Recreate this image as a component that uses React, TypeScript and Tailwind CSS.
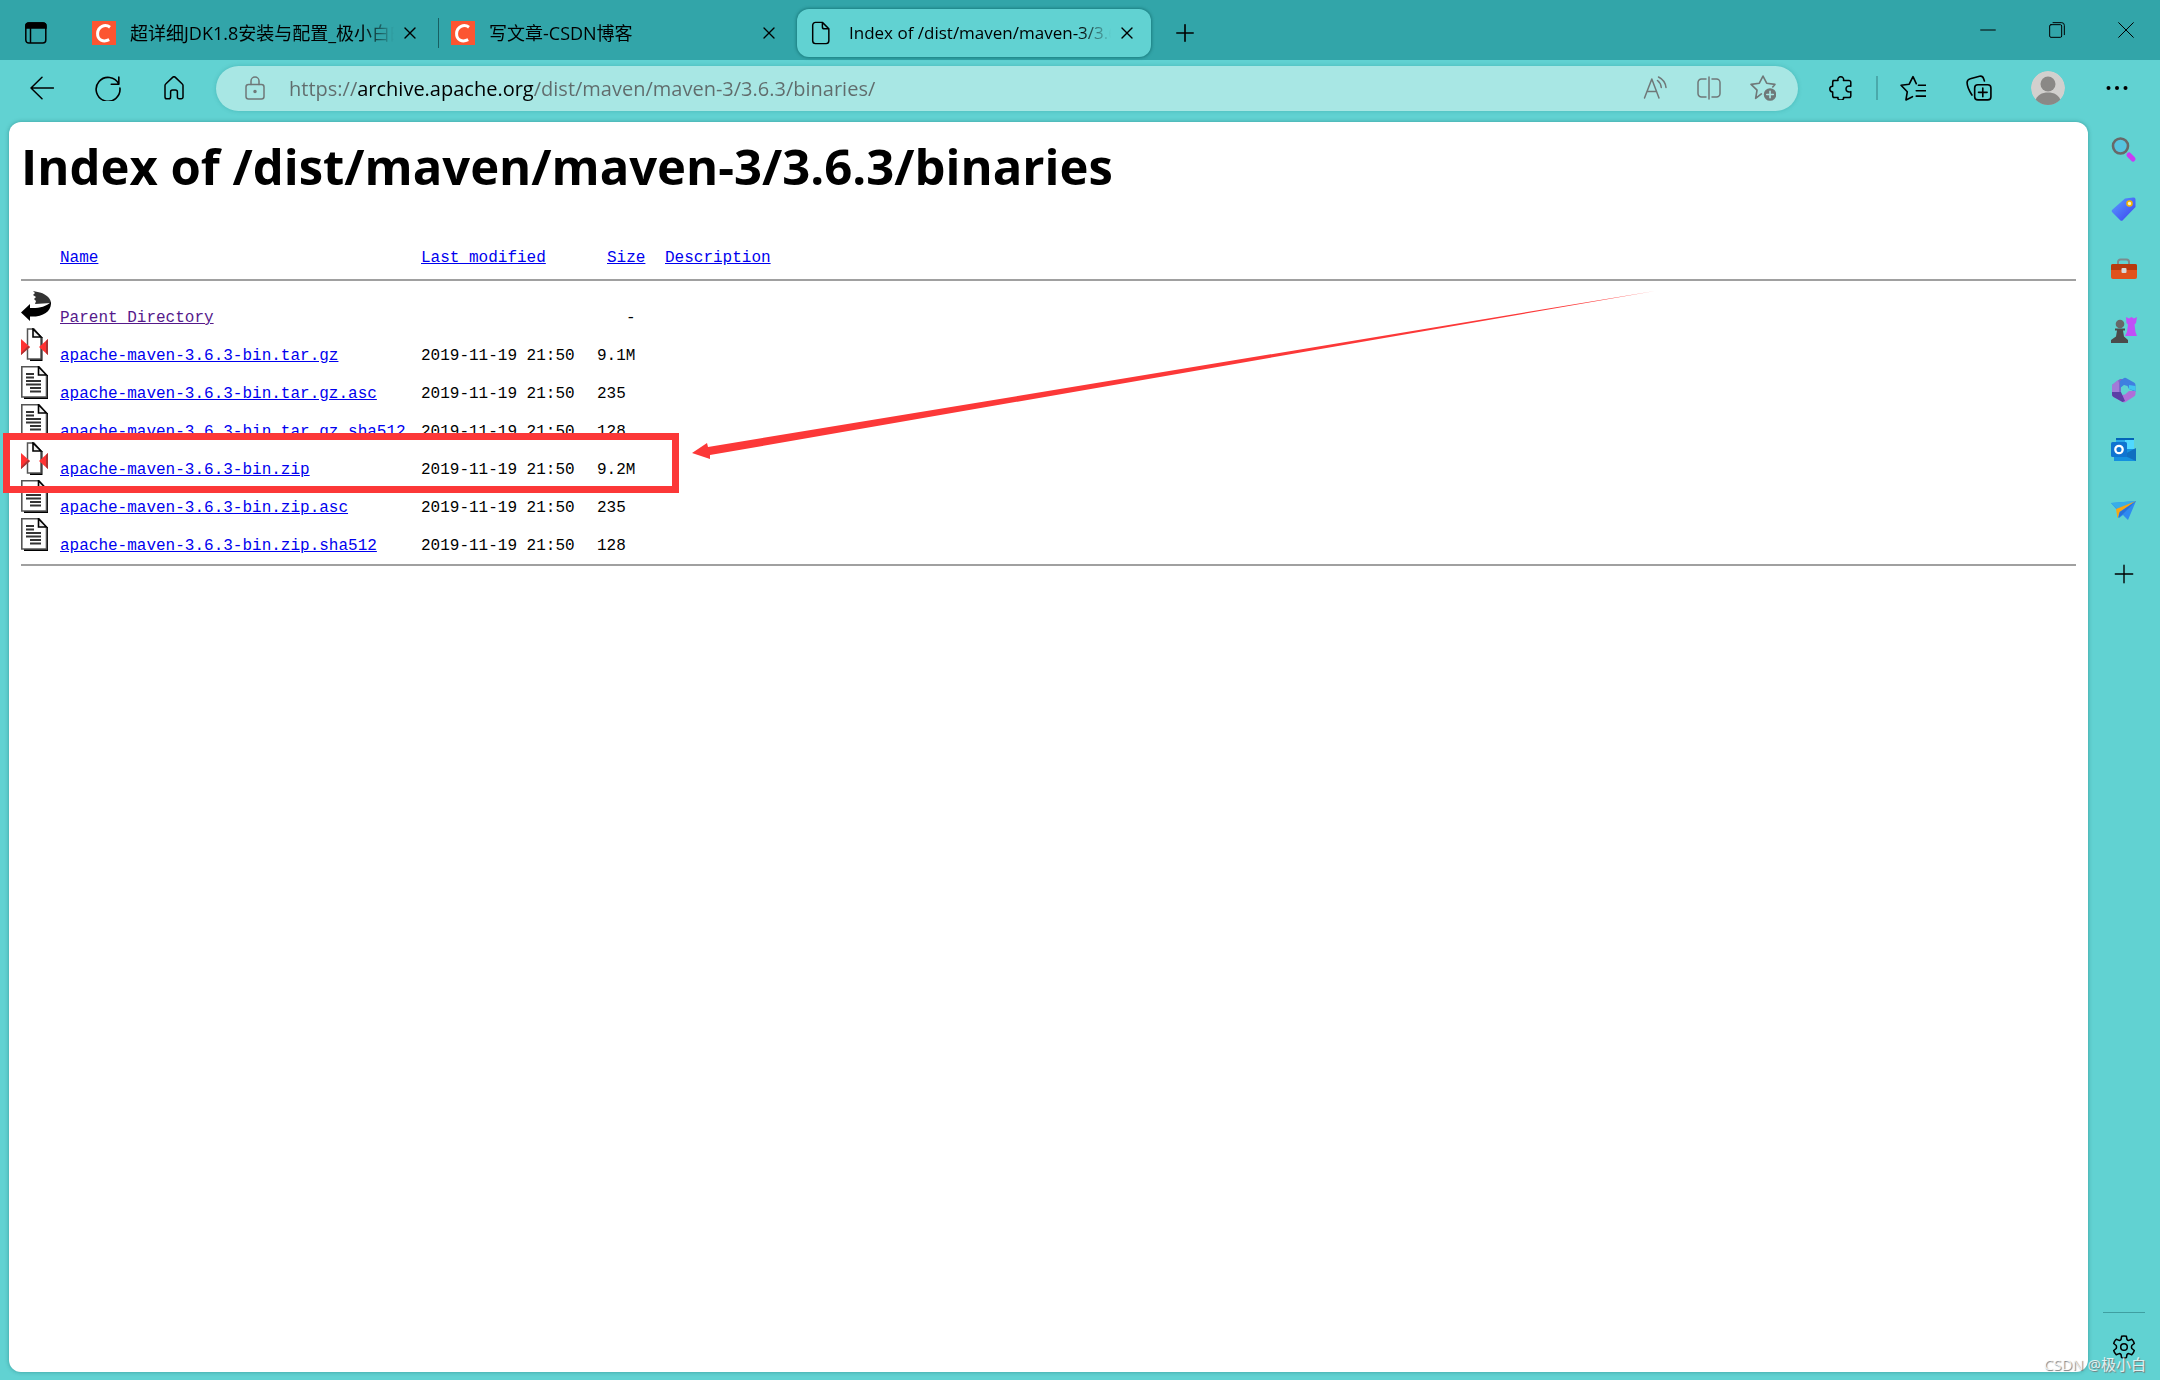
import React from 'react';
import { Plus, X } from 'lucide-react';

const FILES = [
  { name: 'Parent Directory', modified: '', size: '-', icon: 'back' },
  { name: 'apache-maven-3.6.3-bin.tar.gz', modified: '2019-11-19 21:50', size: '9.1M', icon: 'archive' },
  { name: 'apache-maven-3.6.3-bin.tar.gz.asc', modified: '2019-11-19 21:50', size: '235', icon: 'text' },
  { name: 'apache-maven-3.6.3-bin.tar.gz.sha512', modified: '2019-11-19 21:50', size: '128', icon: 'text' },
  { name: 'apache-maven-3.6.3-bin.zip', modified: '2019-11-19 21:50', size: '9.2M', icon: 'archive' },
  { name: 'apache-maven-3.6.3-bin.zip.asc', modified: '2019-11-19 21:50', size: '235', icon: 'text' },
  { name: 'apache-maven-3.6.3-bin.zip.sha512', modified: '2019-11-19 21:50', size: '128', icon: 'text' },
];

const HIGHLIGHTED = 'apache-maven-3.6.3-bin.zip';

type IconProps = { children: React.ReactNode; className?: string };

const Line = ({ children, className = 'size-6' }: IconProps) => (
  <svg viewBox="0 0 24 24" className={className} fill="none" stroke="currentColor" strokeWidth="1.5" strokeLinecap="round" strokeLinejoin="round" aria-hidden="true">
    {children}
  </svg>
);

const IconButton = ({ label, className = 'w-16', children }: IconProps & { label: string }) => (
  <button type="button" aria-label={label} className={`flex h-11 shrink-0 items-center justify-center ${className}`}>
    {children}
  </button>
);

const CsdnIcon = () => (
  <svg viewBox="0 0 24 24" className="size-6 shrink-0" aria-hidden="true">
    <rect width="24" height="24" fill="#fc5531" />
    <path d="M18 6.2C13 2.6 6 5.6 5.6 12.4C5.3 19 11.3 21.6 17.2 18.6" fill="none" stroke="#fff" strokeWidth="3" />
  </svg>
);

const PageIcon = () => (
  <svg viewBox="0 0 20 26" className="h-6 w-5 shrink-0" fill="none" stroke="#000" strokeWidth="1.6" strokeLinejoin="round" aria-hidden="true">
    <path d="M4 1.5h7.5l7 7v13a3 3 0 0 1-3 3H4a3 3 0 0 1-3-3v-17a3 3 0 0 1 3-3zM11.5 1.5v5a2 2 0 0 0 2 2h5" />
  </svg>
);

/* Tab strip */
const Tab = ({ title, icon, active = false }: { title: string; icon: React.ReactNode; active?: boolean }) => (
  <div
    className={
      active
        ? 'flex h-12 w-[354px] items-center rounded-xl bg-[#61d2d2] pl-3.5 pr-2 text-[17px] shadow-[0_0_3px_1px_rgba(0,80,80,0.45)]'
        : 'flex h-12 w-[358px] items-center px-3 text-[18px]'
    }
  >
    <div className="flex w-[38px] shrink-0">{icon}</div>
    <span className="min-w-0 flex-1 overflow-hidden whitespace-nowrap mask-r-from-88%">{title}</span>
    <button type="button" aria-label={`Close ${title}`} className="flex size-8 shrink-0 items-center justify-center">
      <X className="size-5" strokeWidth={1.6} />
    </button>
  </div>
);

const TitleBar = () => (
  <header className="flex h-[60px] items-center justify-between bg-[#32a5a9]">
    <div className="flex items-center pt-1.5">
      <IconButton label="Tab actions" className="w-[72px]">
        <svg viewBox="0 0 24 24" className="size-6" fill="none" stroke="#000" strokeWidth="1.5" aria-hidden="true">
          <rect x="1.8" y="2" width="20" height="20" rx="3" />
          <path d="M2 7V5a3 3 0 0 1 3-3h14a3 3 0 0 1 3 3v2z" fill="#000" />
          <path d="M6.5 7v15" />
        </svg>
      </IconButton>
      <div className="flex items-center pl-2">
        <Tab title="超详细JDK1.8安装与配置_极小白的博客" icon={<CsdnIcon />} />
        <span className="h-[30px] w-px bg-[#175f62]" />
        <Tab title="写文章-CSDN博客" icon={<CsdnIcon />} />
        <Tab title="Index of /dist/maven/maven-3/3.6.3/binaries" icon={<PageIcon />} active />
      </div>
      <IconButton label="New tab" className="w-[68px]">
        <Plus className="size-7" strokeWidth={1.4} />
      </IconButton>
    </div>
    <div className="flex items-center">
      <IconButton label="Minimize" className="w-[69px]">
        <Line className="size-4"><path d="M1 12h22" /></Line>
      </IconButton>
      <IconButton label="Restore" className="w-[69px]">
        <Line className="size-4">
          <rect x="1" y="4" width="18" height="19" rx="2" />
          <path d="M6 1h13a4 4 0 0 1 4 4v14" />
        </Line>
      </IconButton>
      <IconButton label="Close window" className="w-[69px]">
        <Line className="size-4"><path d="M1 1l22 22M23 1L1 23" /></Line>
      </IconButton>
    </div>
  </header>
);

/* Navigation and address bar */
const Toolbar = () => (
  <nav className="flex h-[62px] items-center pb-1.5">
    <div className="flex pl-[9px]">
      <IconButton label="Back" className="w-[66px]">
        <Line><path d="M23.5 12H1M12 1.2L1 12l11 10.8" /></Line>
      </IconButton>
      <IconButton label="Refresh" className="w-[66px]">
        <Line className="size-[26px]"><path d="M22 8.5A11 11 0 1 0 23 12M22 2v6.5h-7" /></Line>
      </IconButton>
      <IconButton label="Home" className="w-[66px]">
        <Line><path d="M3 9.5a2 2 0 0 1 .7-1.5L10.6 1.4a2 2 0 0 1 2.8 0L20.300 8a2 2 0 0 1 .7 1.500V21a1.800 1.800 0 0 1-1.800 1.800h-2A1.800 1.800 0 0 1 15.400 21v-5a2 2 0 0 0-2-2h-2.800a2 2 0 0 0-2 2v5a1.800 1.800 0 0 1-1.800 1.800h-2A1.800 1.800 0 0 1 3 21z" /></Line>
      </IconButton>
    </div>
    <div className="ml-[9px] flex h-[45px] flex-1 items-center rounded-full bg-[#a8e7e4] pl-[27px] pr-2 text-[#6f7878] shadow-[0_0_4px_rgba(0,110,110,0.25)]">
      <Line>
        <rect x="3" y="8.5" width="18" height="14.5" rx="2.5" />
        <path d="M8 8.5V5a4 4 0 0 1 8 0v3.5" />
        <circle cx="12" cy="15.5" r="1" fill="currentColor" />
      </Line>
      <input
        type="text"
        aria-label="Address"
        defaultValue="https://archive.apache.org/dist/maven/maven-3/3.6.3/binaries/"
        className="ml-[22px] h-full min-w-0 flex-1 bg-[linear-gradient(90deg,#606c6c_69px,#000_69px,#000_245px,#606c6c_245px)] bg-clip-text text-[20px] text-transparent caret-black outline-none"
      />
      <IconButton label="Read aloud" className="w-[54px]">
        <Line>
          <path d="M1.5 22L8.800 3l7.200 19M4 15.5h9.500M14.500 4.500c2 1.500 3.500 4 3.800 7M15.500 1c4 2 7 6 7.500 10.500" />
        </Line>
      </IconButton>
      <IconButton label="Split screen" className="w-[54px]">
        <Line>
          <path d="M12 1v22M9 3H4.500A3.500 3.500 0 0 0 1 6.500v11A3.500 3.500 0 0 0 4.500 21H9M15 3h4.500A3.500 3.500 0 0 1 23 6.500v11a3.500 3.500 0 0 1-3.500 3.500H15" />
        </Line>
      </IconButton>
      <IconButton label="Add to favorites" className="w-[54px]">
        <Line className="size-[26px]">
          <path d="M10.500 17.500l-5.300 4 1.300-7.500L1 8.700l7.600-1.100L12 1l3.400 6.600L23 8.700l-2 2.300" />
          <circle cx="18.500" cy="18" r="5.800" fill="currentColor" stroke="none" />
          <path d="M18.500 15v6M15.500 18h6" stroke="#a8e7e4" />
        </Line>
      </IconButton>
    </div>
    <IconButton label="Extensions" className="ml-2.5 w-[66px]">
      <Line>
        <path d="M4 4.500h5c-.6-2 .8-3.700 2.700-3.700s3.400 1.700 2.800 3.700H20a1.800 1.800 0 0 1 1.800 1.800v4c-2.500-.8-4.800.2-4.800 2.700s2.300 3.400 4.800 2.600v4.100a1.800 1.800 0 0 1-1.800 1.800h-5.500c.6 1.500-1 2.500-2.800 2.500S8.400 23 9 21.500H5.500a1.800 1.800 0 0 1-1.800-1.800V16C1.500 15.800.8 14.500.8 13s.9-2.800 2.900-2.800V6.300A1.800 1.800 0 0 1 5.500 4.500z" />
      </Line>
    </IconButton>
    <span className="mx-0.5 h-6 w-0.5 bg-[#4aa9ab]" />
    <IconButton label="Favorites" className="w-[66px]">
      <Line className="size-[26px]">
        <path d="M11.500 20l-6 3 1.200-7.500L1 9.500l7.500-1L12 1.500l3 6.500M17 9.500h7M15 14.500h9M15 19.500h9" />
      </Line>
    </IconButton>
    <IconButton label="Collections" className="w-[66px]">
      <Line className="size-[26px]">
        <rect x="8" y="9" width="15" height="14" rx="3" />
        <path d="M15.500 12v8M11.500 16h8M5.500 18.500C2.500 14 1 9 1 7c0-2 1-3 3-3.500l8.500-2.300c2-.5 3.200.5 3.800 2.300l.7 2" />
      </Line>
    </IconButton>
    <IconButton label="Profile" className="w-[72px]">
      <svg viewBox="0 0 34 34" className="size-[34px] rounded-full" aria-hidden="true">
        <circle cx="17" cy="17" r="17" fill="#d2d0ce" />
        <circle cx="17" cy="13" r="7.500" fill="#8a8886" />
        <path d="M4 30c2-6 7-8.500 13-8.500S28 24 30 30l-6 4H10z" fill="#8a8886" />
      </svg>
    </IconButton>
    <IconButton label="Settings and more" className="mr-2.5 w-[66px]">
      <svg viewBox="0 0 24 24" className="size-6" aria-hidden="true">
        <circle cx="3.500" cy="12" r="2" />
        <circle cx="12" cy="12" r="2" />
        <circle cx="20.500" cy="12" r="2" />
      </svg>
    </IconButton>
  </nav>
);

/* Directory listing */
const FileIcon = ({ type }: { type: string }) => {
  if (type === 'back') {
    return (
      <svg viewBox="0 0 30 30" className="size-[30px]" aria-label="[PARENTDIR]" role="img">
        <path d="M12 0l7 1.500C26 3.500 30 8 30 12L14 13l1-3-2-2 2-2-3-2 2-2z" fill="#333" />
        <path d="M0 21.500L9 13v4c8 .5 16-1 21-6 .5 9-7 15-21 14.500V30z" fill="#000" />
      </svg>
    );
  }
  if (type === 'archive') {
    return (
      <svg viewBox="0 0 27 33" className="h-[33px] w-[27px]" aria-label="[archive]" role="img">
        <path d="M9 32h11.500V9" fill="none" stroke="#000" strokeWidth="2" />
        <path d="M6.500 1H13l7 8v22H6.500z" fill="#fff" stroke="#555" strokeWidth="1.500" />
        <path d="M12 1v8h8z" fill="#eee" stroke="#000" strokeWidth="1.600" />
        <path d="M0 11l9 8-9 8zM27 11l-9 8 9 8z" fill="#f33" />
        <path d="M0 27l9-8-2-1-7 7zM27 11v16l-2-2V13z" fill="#a33" />
      </svg>
    );
  }
  return (
    <svg viewBox="0 0 27 33" className="h-[33px] w-[27px]" aria-label="[TXT]" role="img">
      <path d="M3 32h23V9" fill="none" stroke="#000" strokeWidth="2" />
      <path d="M.8.800H18l7.500 8.500V31H.8z" fill="#fff" stroke="#555" strokeWidth="1.600" />
      <path d="M17.500.800V9h8z" fill="#eee" stroke="#000" strokeWidth="1.600" />
      <path d="M5 8h8M5 11.500h8M5 15h15M5 18.500h15M9 22h11M9 25.500h11" stroke="#333" strokeWidth="1.800" />
    </svg>
  );
};

const Listing = () => (
  <div className="mt-12 border-b-2 border-[#a0a0a0] pb-2">
    <table className="w-full table-fixed text-left font-['Liberation_Mono',monospace] text-[16px] leading-5">
      <colgroup>
        <col className="w-[39px]" />
        <col className="w-[361px]" />
        <col className="w-[176px]" />
        <col className="w-[68px]" />
        <col />
      </colgroup>
      <thead>
        <tr className="h-8 border-b-2 border-[#a0a0a0] align-top text-[#0000ee]">
          <td />
          <th scope="col" className="font-normal"><a href="#name" className="underline">Name</a></th>
          <th scope="col" className="font-normal"><a href="#modified" className="underline">Last modified</a></th>
          <th scope="col" className="pl-2.5 font-normal"><a href="#size" className="underline">Size</a></th>
          <th scope="col" className="font-normal"><a href="#description" className="underline">Description</a></th>
        </tr>
      </thead>
      <tbody>
        {FILES.map((file) => (
          <tr key={file.name} className={file.icon === 'back' ? 'h-12 align-bottom' : 'h-[38px] align-bottom'}>
            <td className={file.icon === 'back' ? 'pt-2.5 align-top' : 'align-top'}>
              <div className={file.name === HIGHLIGHTED ? 'relative' : ''}>
                <FileIcon type={file.icon} />
                {file.name === HIGHLIGHTED && (
                  <>
                    <div className="pointer-events-none absolute -left-[18px] -top-[9px] h-[60px] w-[676px] border-[7px] border-[#fc3838]" />
                    <svg viewBox="0 0 964 170" className="pointer-events-none absolute -top-[152px] left-[671px] h-[170px] w-[964px] max-w-none" aria-hidden="true">
                      <path d="M0 163l15-10 1 4L963 1 18 165l0 4z" fill="#fc3838" />
                    </svg>
                  </>
                )}
              </div>
            </td>
            <td>
              <a href={`#${file.name}`} className={file.icon === 'back' ? 'text-[#551a8b] underline' : 'text-[#0000ee] underline'}>{file.name}</a>
            </td>
            <td>{file.modified}</td>
            <td className={file.size === '-' ? 'pl-[29px]' : ''}>{file.size}</td>
            <td />
          </tr>
        ))}
      </tbody>
    </table>
  </div>
);

/* Edge sidebar */
const SIDEBAR = [
  {
    label: 'Search',
    icon: (
      <>
        <path d="M18 18l4 4" stroke="#c93bf5" strokeWidth="5" strokeLinecap="round" />
        <circle cx="9.500" cy="9" r="7.500" fill="#56c4df" stroke="#686868" strokeWidth="2.600" />
      </>
    ),
  },
  {
    label: 'Shopping',
    icon: (
      <>
        <path d="M14 1.500L22 .500a2 2 0 0 1 2.500 2V10L12 23a2 2 0 0 1-3 0L1.500 15.500a2 2 0 0 1 0-3z" fill="url(#tag)" />
        <circle cx="18.500" cy="6.500" r="2.500" fill="#fff3c4" stroke="#f4b400" strokeWidth="1.600" />
      </>
    ),
  },
  {
    label: 'Tools',
    icon: (
      <>
        <path d="M7 8V5a2.500 2.500 0 0 1 2.500-2.500h6A2.500 2.500 0 0 1 18 5v3" fill="none" stroke="#7b8b8d" strokeWidth="2" />
        <rect x="0" y="7" width="26" height="15" rx="2" fill="#e0521c" />
        <path d="M0 9a2 2 0 0 1 2-2h22a2 2 0 0 1 2 2v4H0z" fill="#b8390e" />
        <rect x="10.500" y="11" width="5" height="5" rx="1" fill="#d8d8d8" />
      </>
    ),
  },
  {
    label: 'Games',
    icon: (
      <>
        <path d="M15 0l3 1.500L20.500 0 23 1.500 26 0l-1 6-1.500 1.500L24.500 15l1.500 4H14l2-4 1-7.500L15.500 6z" fill="#c050f8" />
        <circle cx="9" cy="7" r="4.300" fill="#686868" />
        <path d="M4 11.500h10v2h-2l1 6 4 3.500v3H0v-3l5-3.500 1-6H4z" fill="#4b4b4b" />
      </>
    ),
  },
  {
    label: 'Microsoft 365',
    icon: (
      <>
        <path d="M1 8L9 2h6l-5 8v5l-1 5-5-1-3-2z" fill="#7d68cc" />
        <path d="M1 8l6-5 1 3v10l-7 3z" fill="#a27bd8" />
        <path d="M9 4l4-3a2 2 0 0 1 2 0l8 4.500a3 3 0 0 1 1.500 2.500v7L18 12l-1.500-3L13 8l-4 3z" fill="#3f7fe0" />
        <path d="M18 8l6.500 1v5L18 12z" fill="#42c4f0" />
        <path d="M1 16l7-1 3 3 3-.5L18 14l6.500 0v3a3 3 0 0 1-1.500 2.500L14.500 25a3 3 0 0 1-3 0L2.500 20A3 3 0 0 1 1 17z" fill="#b06fd8" />
        <path d="M1 15l9 0 4 9-2.500 1L2.500 20A3 3 0 0 1 1 17z" fill="#5b3fa6" />
        <path d="M10 11l3-2.500 4 2v4l-3 2.500-4-2z" fill="#61d2d2" />
      </>
    ),
  },
  {
    label: 'Outlook',
    icon: (
      <>
        <path d="M5 1h18v12H5z" fill="#28a8ea" />
        <path d="M14 3h9v9h-9z" fill="#50d9ff" />
        <path d="M5 1h18v2H5z" fill="#0364b8" />
        <path d="M3 12h22v12H3z" fill="#1490df" />
        <path d="M25 11v13L12 18z" fill="#0f6fc0" />
        <rect x="0" y="5" width="16" height="15" rx="1.500" fill="#0f74d1" />
        <circle cx="8" cy="12.500" r="3.700" fill="none" stroke="#fff" strokeWidth="2.300" />
      </>
    ),
  },
  {
    label: 'Drop',
    icon: (
      <>
        <path d="M0 6L25 4 17 23l-5-5-4 3-1-7z" fill="#2f8af0" />
        <path d="M0 6L25 4 6 12z" fill="#38aee8" />
        <path d="M25 4L5 12l1.500 9.500L8.500 15z" fill="#f7a614" />
        <path d="M25 4L9 15l-2 6 5-4z" fill="#2672dc" />
      </>
    ),
  },
];

const Sidebar = () => (
  <aside className="-mt-0.5 flex w-[72px] shrink-0 flex-col items-center">
    <svg className="size-0" aria-hidden="true">
      <linearGradient id="tag" x1="0" y1="0" x2="1" y2="1">
        <stop offset="0" stopColor="#5aa0ff" />
        <stop offset="1" stopColor="#3b3ff0" />
      </linearGradient>
    </svg>
    {SIDEBAR.map((item) => (
      <button key={item.label} type="button" aria-label={item.label} className="flex h-[60px] w-full items-center justify-center">
        <svg viewBox="0 0 26 26" className="size-[26px]" fill="none" aria-hidden="true">{item.icon}</svg>
      </button>
    ))}
    <IconButton label="Customize sidebar" className="mt-3 w-full">
      <Line className="size-[22px]"><path d="M12 2.500v19M2.500 12h19" /></Line>
    </IconButton>
    <div className="mt-auto h-px w-[42px] bg-[#3f9fa1]" />
    <IconButton label="Settings" className="mb-[11px] mt-3 w-full">
      <Line>
        <circle cx="12" cy="12" r="3.300" />
        <path d="M9.600 1.300Q12 .600 14.400 1.300L15 4.500q.7.900 1.800.9l3-1.100q1.800 1.700 2.500 4.200l-2.500 2q-.6 1.500 0 3l2.500 2q-.7 2.500-2.500 4.200l-3-1.100q-1.100 0-1.800.9l-.6 3.100q-2.400.7-4.800 0L9 19.500q-.7-.9-1.800-.9l-3 1.100q-1.800-1.700-2.500-4.200l2.500-2q.6-1.500 0-3l-2.500-2Q2.400 6 4.200 4.300l3 1.100q1.100 0 1.800-.9z" />
      </Line>
    </IconButton>
  </aside>
);

const App = () => {
  return (
    <div className="relative flex min-h-screen flex-col bg-[#61d2d2] font-['Open_Sans','Noto_Sans_CJK_SC',sans-serif] text-black">
      <TitleBar />
      <Toolbar />
      <div className="flex flex-1 pl-[9px]">
        <main className="mb-2 min-w-0 flex-1 rounded-xl bg-white px-3 pt-2.5 shadow-[0_0_4px_rgba(0,80,80,0.4)]">
          <h1 className="text-[49px] font-bold leading-[68px]">Index of /dist/maven/maven-3/3.6.3/binaries</h1>
          <Listing />
        </main>
        <Sidebar />
      </div>
      <span className="absolute bottom-1 right-3.5 whitespace-nowrap text-[15px] leading-6 text-white/80 [text-shadow:1px_1px_1px_#777]">CSDN @极小白</span>
    </div>
  );
};

export default App;
